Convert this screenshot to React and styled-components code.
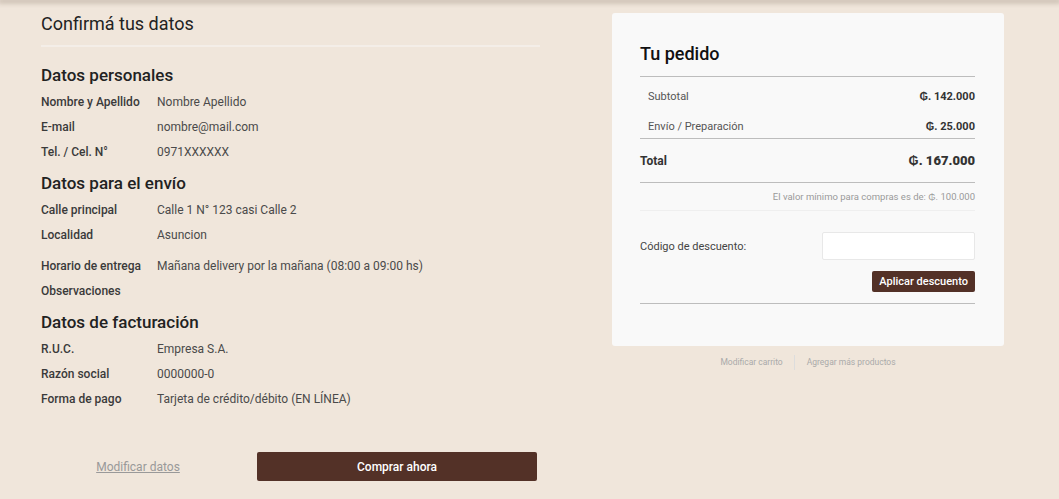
import React from 'react';
import styled, { createGlobalStyle } from 'styled-components';

const GlobalStyle = createGlobalStyle`
    html, body {
        margin: 0;
        padding: 0;
        background: #f0e6db;
        font-family: Roboto, "Open Sans", sans-serif;
        color: #333;
    }
`

const personal = [
    { label: 'Nombre y Apellido', value: 'Nombre Apellido' },
    { label: 'E-mail', value: 'nombre@mail.com' },
    { label: 'Tel. / Cel. N°', value: '0971XXXXXX' }
]

const shipping = [
    { label: 'Calle principal', value: 'Calle 1 N° 123 casi Calle 2' },
    { label: 'Localidad', value: 'Asuncion' },
    { label: 'Horario de entrega', value: 'Mañana delivery por la mañana (08:00 a 09:00 hs)', spaced: true },
    { label: 'Observaciones', value: '' }
]

const billing = [
    { label: 'R.U.C.', value: 'Empresa S.A.' },
    { label: 'Razón social', value: '0000000-0' },
    { label: 'Forma de pago', value: 'Tarjeta de crédito/débito (EN LÍNEA)' }
]

const Section = ({ title, rows }) => (
    <StyledSection>
        <h3>{title}</h3>
        {rows.map(row => (
            <DataRow key={row.label} $spaced={row.spaced}>
                <span className="label">{row.label}</span>
                <span className="value">{row.value}</span>
            </DataRow>
        ))}
    </StyledSection>
)

const App = () => {
    return (
        <>
            <GlobalStyle />
            <TopShadow />
            <Page>
                <LeftColumn>
                    <PageTitle>Confirmá tus datos</PageTitle>
                    <Section title="Datos personales" rows={personal} />
                    <Section title="Datos para el envío" rows={shipping} />
                    <Section title="Datos de facturación" rows={billing} />
                    <Actions>
                        <a href="#" className="modify">Modificar datos</a>
                        <BuyButton>Comprar ahora</BuyButton>
                    </Actions>
                </LeftColumn>

                <RightColumn>
                    <OrderCard>
                        <h2>Tu pedido</h2>
                        <Breakdown>
                            <SummaryRow>
                                <span>Subtotal</span>
                                <strong>₲. 142.000</strong>
                            </SummaryRow>
                            <SummaryRow>
                                <span>Envío / Preparación</span>
                                <strong>₲. 25.000</strong>
                            </SummaryRow>
                        </Breakdown>
                        <TotalRow>
                            <span>Total</span>
                            <strong>₲. 167.000</strong>
                        </TotalRow>
                        <MinNote>El valor mínimo para compras es de: ₲. 100.000</MinNote>
                        <Discount>
                            <div className="field">
                                <label htmlFor="code">Código de descuento:</label>
                                <input type="text" id="code" />
                            </div>
                            <button type="button">Aplicar descuento</button>
                        </Discount>
                    </OrderCard>
                    <CartLinks>
                        <a href="#">Modificar carrito</a>
                        <a href="#">Agregar más productos</a>
                    </CartLinks>
                </RightColumn>
            </Page>
        </>
    )
}

export default App;

const TopShadow = styled.div`
    height: 0;
    box-shadow: 0 1px 5px 2px rgba(90, 70, 50, .3);
`

const Page = styled.main`
    display: flex;
    align-items: flex-start;
    padding: 0 0 0 41px;
    gap: 72px;
`

const LeftColumn = styled.div`
    width: 499px;
    flex-shrink: 0;
    padding-top: 13px;
`

const PageTitle = styled.h1`
    margin: 0;
    padding-bottom: 10px;
    font-size: 18px;
    line-height: 22px;
    font-weight: 400;
    color: #222;
    border-bottom: 2px solid #f4eee8;
`

const StyledSection = styled.section`
    h3 {
        margin: 0;
        font-size: 17px;
        line-height: 22px;
        font-weight: 500;
        color: #222;
        padding-top: 8px;
        padding-bottom: 3px;
    }

    &:first-of-type h3 {
        padding-top: 17px;
    }
`

const DataRow = styled.div`
    display: flex;
    align-items: center;
    height: 25px;
    margin-top: ${props => props.$spaced ? '6px' : '0'};
    font-size: 12px;

    .label {
        width: 116px;
        flex-shrink: 0;
        font-weight: 500;
        color: #3a3a3a;
    }

    .value {
        color: #4a4a4a;
    }
`

const Actions = styled.div`
    display: flex;
    justify-content: space-between;
    align-items: center;
    margin-top: 41px;
    padding-right: 3px;

    .modify {
        width: 194px;
        text-align: center;
        font-size: 12px;
        color: #999;
        text-decoration: underline;
    }
`

const BuyButton = styled.button`
    width: 280px;
    height: 29px;
    border: none;
    border-radius: 2px;
    background: #533127;
    color: #fff;
    font-family: inherit;
    font-size: 12px;
    font-weight: 500;
`

const RightColumn = styled.aside`
    width: 392px;
    flex-shrink: 0;
    padding-top: 13px;
`

const OrderCard = styled.div`
    background: #f9f9f9;
    border-radius: 3px;
    padding: 30px 29px 42px 28px;

    h2 {
        margin: 0;
        font-size: 18px;
        line-height: 22px;
        font-weight: 500;
        color: #111;
        padding-bottom: 11px;
        border-bottom: 1px solid #bdbdbd;
    }
`

const Breakdown = styled.div`
    display: flex;
    flex-direction: column;
    gap: 6px;
    padding-top: 7px;
    border-bottom: 1px solid #bdbdbd;
`

const SummaryRow = styled.div`
    display: flex;
    justify-content: space-between;
    align-items: center;
    height: 24px;
    padding-left: 8px;
    font-size: 11px;
    color: #555;

    strong {
        font-weight: 700;
        color: #333;
    }
`

const TotalRow = styled.div`
    display: flex;
    justify-content: space-between;
    align-items: center;
    height: 43px;
    border-bottom: 1px solid #bdbdbd;
    font-size: 12px;
    font-weight: 700;
    color: #333;

    strong {
        font-size: 13px;
    }
`

const MinNote = styled.p`
    margin: 0;
    padding: 8px 0 8px;
    text-align: right;
    font-size: 9.5px;
    color: #9a9a9a;
    border-bottom: 1px solid #efefef;
`

const Discount = styled.div`
    padding-top: 21px;
    border-bottom: 1px solid #bdbdbd;
    padding-bottom: 11px;

    .field {
        display: flex;
        justify-content: space-between;
        align-items: center;
    }

    label {
        font-size: 11px;
        color: #444;
    }

    input {
        width: 153px;
        height: 28px;
        box-sizing: border-box;
        border: 1px solid #e8e8e8;
        border-radius: 2px;
        background: #fff;
        outline: none;
    }

    button {
        display: block;
        margin: 11px 0 0 auto;
        height: 21px;
        padding: 0 7px;
        border: none;
        border-radius: 2px;
        background: #533127;
        color: #fff;
        font-family: inherit;
        font-size: 11px;
        font-weight: 500;
    }
`

const CartLinks = styled.div`
    display: flex;
    justify-content: center;
    align-items: center;
    margin-top: 9px;

    a {
        font-size: 8.5px;
        color: #aaa;
        text-decoration: none;
        padding: 0 11px;
        line-height: 15px;
    }

    a + a {
        border-left: 1px solid #ddd;
        padding-left: 12px;
    }
`
